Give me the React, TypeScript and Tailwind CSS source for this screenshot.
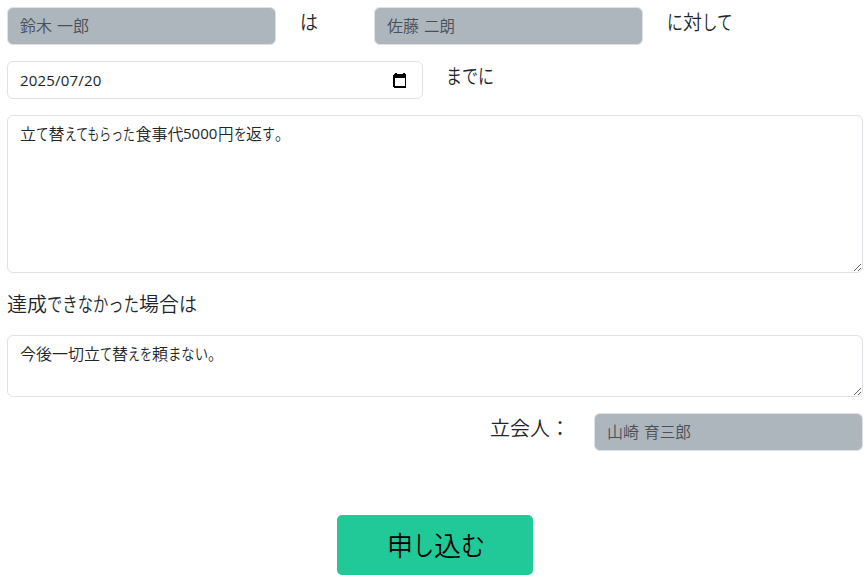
import type { ReactNode } from 'react';

type Run = [text: string, width: number];

// Sets each run of characters to its own advance width, so kana can be narrower than kanji.
function Runs({ size, runs }: { size: number; runs: Run[] }) {
  return (
    <span className="flex whitespace-pre" style={{ fontSize: size }}>
      {runs.map(([text, width], i) => (
        <span key={i} className="block" style={{ width }}>
          <span
            className="block w-max origin-left"
            style={{ transform: `scaleX(${width / (text.length * size)})` }}
          >
            {text}
          </span>
        </span>
      ))}
    </span>
  );
}

function NameField({ children }: { children: ReactNode }) {
  return (
    <div className="h-[38px] w-[269px] shrink-0 rounded-md border border-[#dee2e6] bg-[#adb5bd] px-3 pt-[5px] text-[16px] leading-6 text-[#4a5056]">
      {children}
    </div>
  );
}

function Area({ className, children }: { className: string; children: ReactNode }) {
  return (
    <div className={`w-[856px] resize overflow-hidden rounded-md border border-[#dee2e6] bg-white px-3 pt-[5px] leading-6 ${className}`}>
      {children}
    </div>
  );
}

export default function App() {
  return (
    <main className="h-[580px] w-[868px] overflow-hidden bg-white pt-[7px] pl-[7px] font-['Noto_Sans_CJK_JP_DemiLight','Noto_Sans_CJK_JP',sans-serif] font-[350] text-[#212529]">
      <div className="flex h-[54px]">
        <NameField><Runs size={16} runs={[['鈴木', 32], [' ', 5], ['一郎', 32]]} /></NameField>
        <div className="ml-[24px] w-[74px] leading-[30px]"><Runs size={20} runs={[['は', 18]]} /></div>
        <NameField><Runs size={16} runs={[['佐藤', 32], [' ', 5], ['二朗', 31]]} /></NameField>
        <div className="ml-[24px] leading-[30px]"><Runs size={20} runs={[['に', 16], ['対', 19], ['して', 31]]} /></div>
      </div>

      <div className="flex h-[54px]">
        <div className="flex h-[38px] w-[416px] items-center justify-between rounded-md border border-[#dee2e6] pr-[15px] pl-3">
          <span className="font-['Open_Sans',sans-serif] text-[15px] font-normal leading-6 tracking-[0.2px]">2025/07/20</span>
          <svg className="h-[15px] w-[14px]" viewBox="1 0 14 15" fill="black" shapeRendering="crispEdges">
            <path d="M3 1V0h2v1h6V0h2v1h1v1h1v12h-1v1H2v-1H1V2h1V1zM3 5v8h10V5z" fillRule="evenodd" transform="translate(.5 0) scale(.93 1)" />
          </svg>
        </div>
        <div className="ml-[23px] leading-[30px]"><Runs size={20} runs={[['までに', 48]]} /></div>
      </div>

      <Area className="h-[158px]">
        <Runs
          size={16}
          runs={[['立', 16], ['て', 12.5], ['替', 16], ['えてもらった', 71], ['食事代', 48]]}
        />
        <span className="-mt-6 ml-[163px] flex">
          <span className="w-[35px] font-['Open_Sans',sans-serif] text-[15px] font-normal leading-6">5000</span>
          <Runs size={16} runs={[['円', 15.5], ['を', 12.5], ['返', 16], ['す', 13], ['。', 15]]} />
        </span>
      </Area>

      <div className="flex h-[62px] pt-[16px] leading-[30px]">
        <Runs size={20} runs={[['達成', 40], ['できなかった', 92], ['場合', 40], ['は', 18]]} />
      </div>

      <Area className="h-[62px]">
        <Runs
          size={16}
          runs={[['今後一切立', 80], ['て', 12], ['替', 16], ['えを', 24], ['頼', 16], ['まない', 40], ['。', 15]]}
        />
      </Area>

      <div className="mt-4 flex w-[856px] justify-end">
        <div className="w-[104px] leading-[30px]"><Runs size={20} runs={[['立会人', 60], ['：', 20]]} /></div>
        <NameField><Runs size={16} runs={[['山崎', 32], [' ', 5], ['育三郎', 47]]} /></NameField>
      </div>

      <button className="mt-16 ml-[330px] flex h-[60px] w-[196px] items-center justify-center rounded-[5px] bg-[#20c997] pl-[2px] leading-[42px] text-black">
        <Runs size={27} runs={[['申', 26], ['し', 21], ['込', 27], ['む', 24]]} />
      </button>
    </main>
  );
}
